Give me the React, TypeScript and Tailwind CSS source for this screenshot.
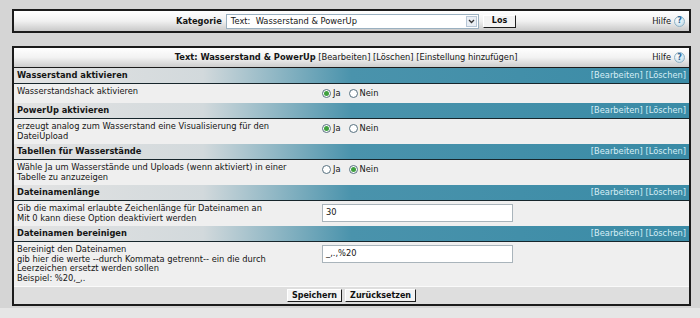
import React from "react";

// Admin settings page: category picker + settings table
type Control =
  | { type: "radio"; value: "ja" | "nein" }
  | { type: "input"; value: string };

const SECTIONS: { title: string; lines: string[]; control: Control }[] = [
  {
    title: "Wasserstand aktivieren",
    lines: ["Wasserstandshack aktivieren"],
    control: { type: "radio", value: "ja" },
  },
  {
    title: "PowerUp aktivieren",
    lines: ["erzeugt analog zum Wasserstand eine Visualisierung für den", "DateiUpload"],
    control: { type: "radio", value: "ja" },
  },
  {
    title: "Tabellen für Wasserstände",
    lines: ["Wähle Ja um Wasserstände und Uploads (wenn aktiviert) in einer", "Tabelle zu anzuzeigen"],
    control: { type: "radio", value: "nein" },
  },
  {
    title: "Dateinamenlänge",
    lines: ["Gib die maximal erlaubte Zeichenlänge für Dateinamen an", "Mit 0 kann diese Option deaktiviert werden"],
    control: { type: "input", value: "30" },
  },
  {
    title: "Dateinamen bereinigen",
    lines: [
      "Bereinigt den Dateinamen",
      "gib hier die werte --durch Kommata getrennt-- ein die durch",
      "Leerzeichen ersetzt werden sollen",
      "Beispiel: %20,_,.",
    ],
    control: { type: "input", value: "_,.,%20" },
  },
];

function HelpIcon() {
  return (
    <span className="ml-[3px] inline-flex h-[11px] w-[11px] items-center justify-center rounded-full border border-[#8fb3c7] bg-[radial-gradient(circle_at_35%_30%,#ffffff,#b9d6e6)] text-[8px] font-bold leading-none text-[#2d6a9a]">
      ?
    </span>
  );
}

function Radio({ checked, label }: { checked: boolean; label: string }) {
  return (
    <span className="flex items-center gap-[2px]">
      <span className="flex h-[9px] w-[9px] items-center justify-center rounded-full border border-[#56707f] bg-white">
        {checked && <span className="h-[5px] w-[5px] rounded-full bg-[#3fa03f]" />}
      </span>
      <span>{label}</span>
    </span>
  );
}

function Button({ children }: { children: React.ReactNode }) {
  return (
    <span className="flex h-[13px] items-center border border-t-white border-l-white border-b-[#1f1f1f] border-r-[#1f1f1f] bg-[#f3f3f3] px-[4px] text-[8px] font-bold text-[#111]">
      {children}
    </span>
  );
}

export default function App() {
  return (
    <div className="h-[318px] bg-[linear-gradient(to_bottom,#d5d5d5_0%,#d5d5d5_97%,#e6e6e6_97%)] pt-[9px] font-['DejaVu_Sans',Verdana,sans-serif] text-[8.3px] text-[#151515]">
      <div className="ml-[12px] w-[679px]">
        {/* Category bar */}
        <div className="flex h-[24px] items-center border-2 border-[#1b1b1b] bg-gradient-to-b from-white via-[#f1f1f1] to-[#c9c9c9]">
          <div className="flex flex-1 items-center justify-center gap-[4px] pl-[26px]">
            <span className="font-bold">Kategorie</span>
            <span className="flex h-[15px] w-[253px] items-center justify-between border border-[#9ab0c0] bg-white pl-[4px] pr-[1px]">
              <span className="whitespace-pre">Text:  Wasserstand &amp; PowerUp</span>
              <span className="flex h-[11px] w-[11px] items-center justify-center border border-[#b7c6d6] bg-[#e9eef4]">
                <svg width="7" height="5" viewBox="0 0 7 5">
                  <path d="M1 1 L3.5 3.5 L6 1" fill="none" stroke="#333" strokeWidth="1.3" />
                </svg>
              </span>
            </span>
            <Button>
              <span className="px-[4px]">Los</span>
            </Button>
          </div>
          <div className="flex items-center pr-[4px]">
            <span>Hilfe</span>
            <HelpIcon />
          </div>
        </div>

        {/* Settings panel */}
        <div className="mt-[13px] border-2 border-[#1b1b1b] bg-[#efefef]">
          <div className="flex h-[20px] items-center border-b border-[#1b1b1b] bg-gradient-to-b from-white via-[#f2f2f2] to-[#cdcdcd]">
            <div className="flex-1 pl-[26px] text-center">
              <span className="font-bold">Text: Wasserstand &amp; PowerUp</span> [Bearbeiten] [Löschen] [Einstellung hinzufügen]
            </div>
            <div className="flex items-center pr-[4px]">
              <span>Hilfe</span>
              <HelpIcon />
            </div>
          </div>

          {SECTIONS.map((s) => (
            <div key={s.title}>
              <div className="flex h-[16px] items-center justify-between border-b border-[#17262c] bg-[linear-gradient(to_right,#e3e3e3_0%,#d2d9dc_28%,#4a93ac_50%,#3a8ba6_100%)] pl-[3px] pr-[3px]">
                <span className="font-bold">{s.title}</span>
                <span className="text-[#d6eef6]">[Bearbeiten] [Löschen]</span>
              </div>
              <div className="grid grid-cols-[304px_1fr] py-[3px] leading-[9.5px]">
                <div className="pl-[3px]">
                  {s.lines.map((l) => (
                    <div key={l}>{l}</div>
                  ))}
                </div>
                <div className="pl-[4px]">
                  {s.control.type === "radio" ? (
                    <div className="flex h-[13px] items-center gap-[8px]">
                      <Radio checked={s.control.value === "ja"} label="Ja" />
                      <Radio checked={s.control.value === "nein"} label="Nein" />
                    </div>
                  ) : (
                    <div className="flex h-[18px] w-[191px] items-center border border-[#a9b4bb] bg-white pl-[3px]">
                      {s.control.value}
                    </div>
                  )}
                </div>
              </div>
            </div>
          ))}

          <div className="flex h-[18px] items-center justify-center gap-[3px] border-t border-[#fafafa] bg-[#dedede]">
            <Button>Speichern</Button>
            <Button>Zurücksetzen</Button>
          </div>
        </div>
      </div>
    </div>
  );
}
